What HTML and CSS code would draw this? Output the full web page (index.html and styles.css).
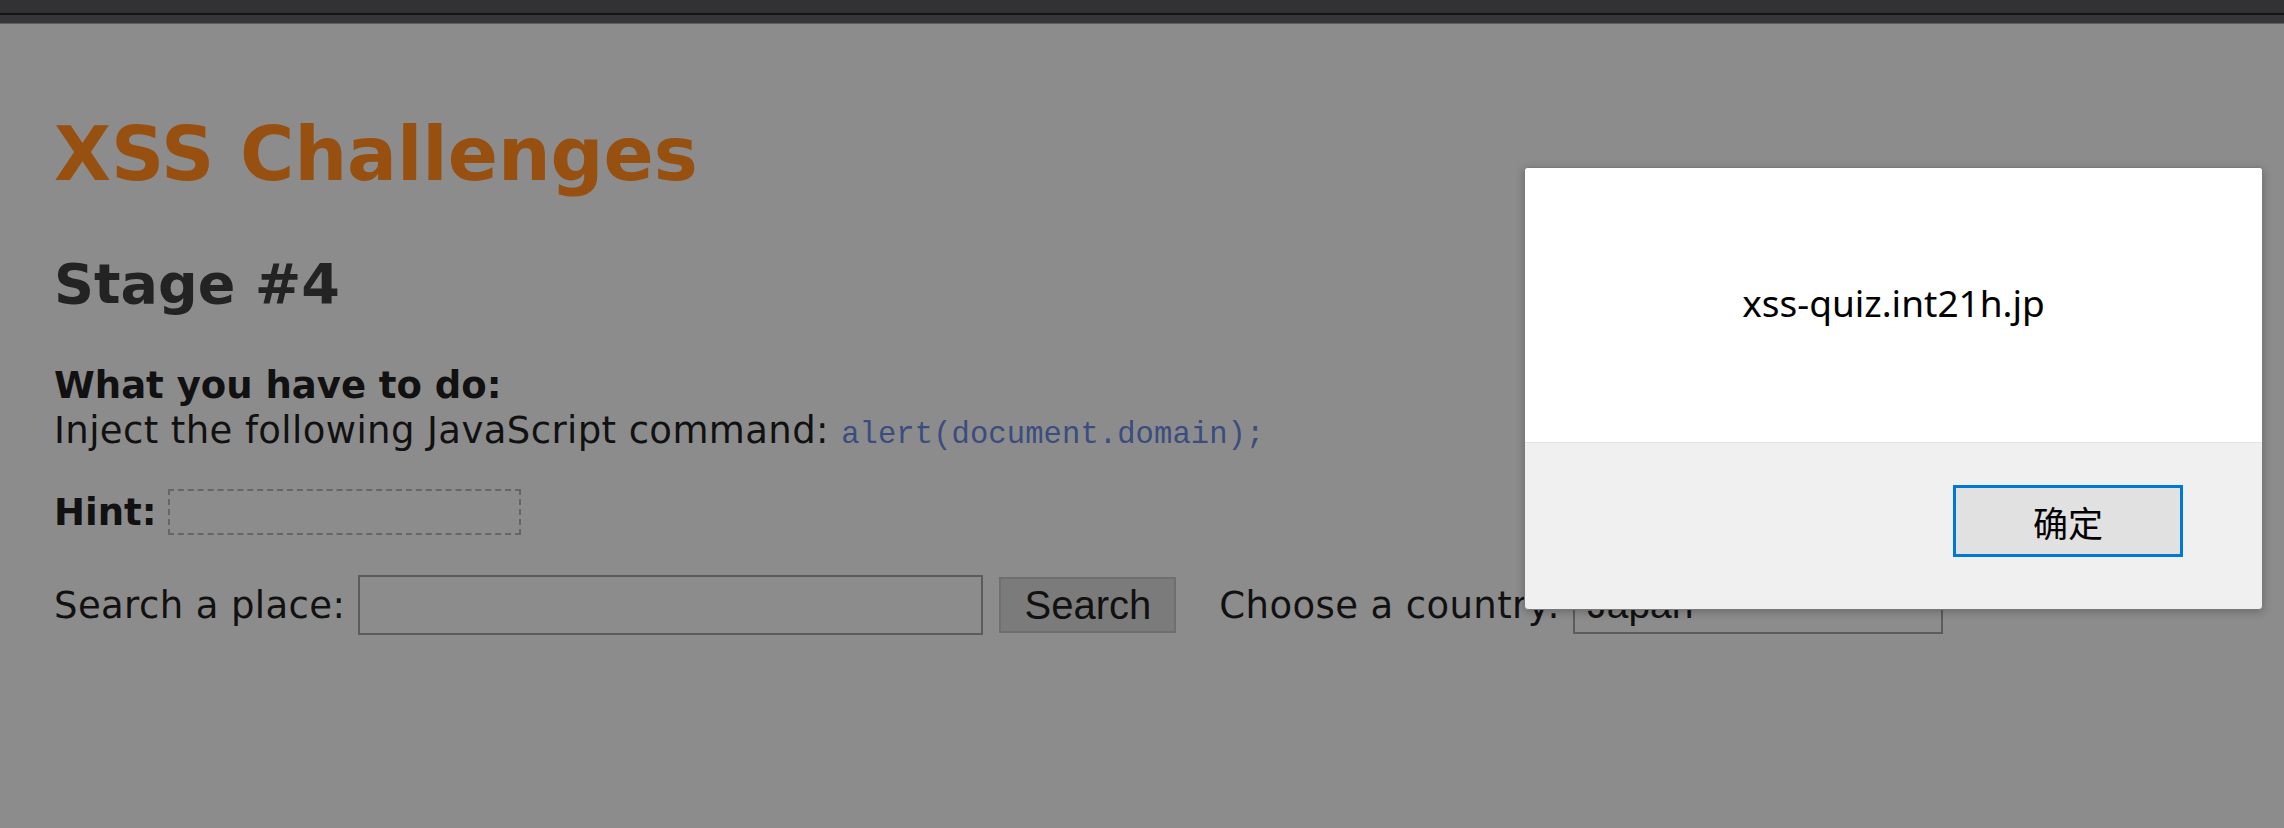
FILE: index.html
```html
<!DOCTYPE html>
<html lang="en">
<head>
<meta charset="utf-8">
<title>XSS Challenges</title>
<link rel="stylesheet" href="styles.css">
</head>
<body>
<div class="chrome-bar">
  <div class="bar-top"></div>
  <div class="bar-line"></div>
  <div class="bar-bottom"></div>
  <div class="bar-edge"></div>
</div>
<main class="page">
  <h1 class="title">XSS Challenges</h1>
  <h2 class="stage">Stage #4</h2>
  <div class="task">
    <b class="task-label">What you have to do:</b><br>
    Inject the following JavaScript command: <code class="cmd">alert(document.domain);</code>
  </div>
  <div class="hint-row">
    <b class="hint-label">Hint:</b>
    <span class="hint-box"></span>
  </div>
  <form class="search-row">
    <span class="lbl">Search a place:</span>
    <span class="text-input"></span>
    <span class="btn">Search</span>
    <span class="lbl country">Choose a country:</span>
    <span class="select">Japan</span>
  </form>
</main>
<div class="dialog">
  <div class="dialog-body">xss-quiz.int21h.jp</div>
  <div class="dialog-foot">
    <span class="ok-btn">确定</span>
  </div>
</div>
</body>
</html>
```
FILE: styles.css
```css
html, body {
  margin: 0;
  padding: 0;
  background: #8c8c8c;
  height: 100%;
  overflow: hidden;
}
body {
  font-family: "DejaVu Sans", Verdana, sans-serif;
  color: #111;
}
.chrome-bar .bar-top { height: 13px; background: #323234; }
.chrome-bar .bar-line { height: 2px; background: #141416; }
.chrome-bar .bar-bottom { height: 8px; background: #363638; }
.chrome-bar .bar-edge { height: 1px; background: #5e5e5e; }

.page {
  padding-left: 54px;
}
.title {
  margin: 86px 0 0;
  font-size: 74px;
  line-height: 89px;
  font-weight: bold;
  color: #97500f;
}
.stage {
  margin: 51px 0 0;
  font-size: 55.5px;
  line-height: 67px;
  font-weight: bold;
  color: #232323;
}
.task {
  margin-top: 46px;
  font-size: 37px;
  line-height: 45px;
  letter-spacing: 0.4px;
  color: #111;
}
.task-label {
  color: #111;
  letter-spacing: 0;
}
.cmd {
  font-family: "Liberation Mono", monospace;
  font-size: 30.5px;
  letter-spacing: 0.1px;
  color: #3b4c7e;
}
.hint-row {
  margin-top: 31px;
  display: flex;
  align-items: center;
  gap: 12px;
  font-size: 37px;
  line-height: 45px;
}
.hint-box {
  width: 353px;
  height: 46px;
  box-sizing: border-box;
  border: 2px dashed #666;
}
.search-row {
  margin: 40px 0 0;
  display: flex;
  align-items: center;
  font-size: 37px;
  line-height: 45px;
  letter-spacing: 0.4px;
}
.text-input {
  margin-left: 13px;
  width: 625px;
  height: 60px;
  box-sizing: border-box;
  border: 2px solid #5c5c5c;
}
.btn {
  margin-left: 16px;
  width: 177px;
  height: 56px;
  box-sizing: border-box;
  border: 2px solid #6f6f6f;
  background: #7b7b7b;
  display: flex;
  align-items: center;
  justify-content: center;
  font-family: "Liberation Sans", Arial, sans-serif;
  font-size: 40px;
  letter-spacing: 0;
  color: #111;
}
.country { margin-left: 43px; }
.select {
  margin-left: 13px;
  width: 370px;
  height: 58px;
  box-sizing: border-box;
  border: 2px solid #5c5c5c;
  padding-left: 12px;
  font-family: "Liberation Sans", Arial, sans-serif;
  font-size: 39px;
  line-height: 54px;
  letter-spacing: 0;
  color: #111;
}

.dialog {
  position: absolute;
  left: 1524px;
  top: 167px;
  width: 739px;
  height: 443px;
  box-sizing: border-box;
  border: 1px solid #7a7a7a;
  border-radius: 4px;
  overflow: hidden;
  background: #f0f0f0;
  box-shadow: 0 2px 8px rgba(0,0,0,0.25);
  display: flex;
  flex-direction: column;
}
.dialog-body {
  height: 275px;
  box-sizing: border-box;
  background: #fff;
  border-bottom: 1px solid #e3e3e3;
  display: flex;
  justify-content: center;
  padding-top: 110px;
  font-family: "Noto Sans", "Noto Sans CJK SC", sans-serif;
  font-size: 37px;
  line-height: 50px;
  color: #000;
}
.dialog-foot {
  flex: 1;
  display: flex;
  justify-content: flex-end;
  align-items: flex-start;
  padding: 42px 79px 0 0;
}
.ok-btn {
  width: 230px;
  height: 72px;
  box-sizing: border-box;
  border: 3px solid #0078d7;
  background: #e1e1e1;
  display: flex;
  align-items: center;
  justify-content: center;
  font-family: "Noto Sans CJK SC", sans-serif;
  font-size: 35px;
  color: #000;
}
```
